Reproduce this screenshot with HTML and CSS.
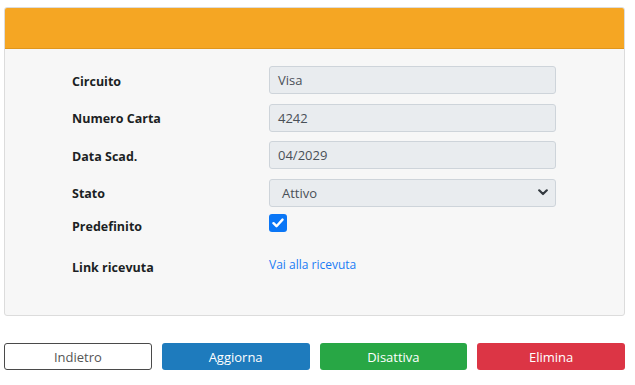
FILE: index.html
```html
<!DOCTYPE html>
<html lang="it">
<head>
<meta charset="utf-8">
<link rel="stylesheet" href="styles.css">
</head>
<body>
<div class="page">
  <div class="card">
    <div class="card-header"></div>
    <div class="card-body">
      <div class="row">
        <div class="label">Circuito</div>
        <div class="field"><div class="input">Visa</div></div>
      </div>
      <div class="row">
        <div class="label">Numero Carta</div>
        <div class="field"><div class="input">4242</div></div>
      </div>
      <div class="row">
        <div class="label">Data Scad.</div>
        <div class="field"><div class="input">04/2029</div></div>
      </div>
      <div class="row">
        <div class="label">Stato</div>
        <div class="field">
          <div class="input select">
            <span>Attivo</span>
            <svg class="chev" width="10" height="7" viewBox="0 0 10 7"><path d="M1.2 1.3 L5 5 L8.8 1.3" fill="none" stroke="#343a40" stroke-width="2.2" stroke-linecap="round" stroke-linejoin="round"/></svg>
          </div>
        </div>
      </div>
      <div class="row row-check">
        <div class="label">Predefinito</div>
        <div class="field">
          <span class="checkbox"><svg width="12" height="10" viewBox="0 0 12 10"><path d="M1.5 5.2 L4.5 8.2 L10.5 1.6" fill="none" stroke="#fff" stroke-width="2.4" stroke-linecap="round" stroke-linejoin="round"/></svg></span>
        </div>
      </div>
      <div class="row row-link">
        <div class="label">Link ricevuta</div>
        <div class="field"><a class="link" href="#">Vai alla ricevuta</a></div>
      </div>
    </div>
  </div>
  <div class="actions">
    <button class="btn btn-outline">Indietro</button>
    <button class="btn btn-blue">Aggiorna</button>
    <button class="btn btn-green">Disattiva</button>
    <button class="btn btn-red">Elimina</button>
  </div>
</div>
</body>
</html>
```

FILE: styles.css
```css
* { box-sizing: border-box; }
html, body { margin: 0; padding: 0; background: #fff; }
body {
  font-family: "Open Sans", "Liberation Sans", sans-serif;
  font-size: 13px;
  color: #212529;
}
.page {
  width: 621px;
  margin: 7px 0 0 4px;
}
.card {
  border: 1px solid #dcdcdc;
  border-radius: 3px;
  background: #f7f7f7;
  overflow: hidden;
}
.card-header {
  height: 41px;
  background: #f5a623;
  border-bottom: 1px solid #e0961c;
}
.card-body {
  padding: 17px 0 0 67px;
  height: 266px;
}
.row {
  display: flex;
  align-items: center;
  height: 28px;
  margin-bottom: 9.5px;
}
.label {
  width: 197px;
  font-weight: 700;
  font-size: 12.5px;
  color: #1c1f24;
  padding-top: 2px;
}
.field { width: 287px; }
.input {
  height: 28px;
  background: #e9ecef;
  border: 1px solid #ced4da;
  border-radius: 3px;
  padding: 0 8px;
  display: flex;
  align-items: center;
  color: #495057;
  font-size: 13px;
}
.select {
  justify-content: space-between;
  padding: 0 7px 0 12px;
}
.chev { display: block; }
.row-check { height: 18px; margin-top: -2px; margin-bottom: 0; align-items: center; }
.row-check .label { margin-top: 6px; padding-top: 0; }
.checkbox {
  width: 18px;
  height: 18px;
  border-radius: 3px;
  background: #0a76f6;
  display: flex;
  align-items: center;
  justify-content: center;
}
.row-link { margin-top: 22px; height: 20px; }
.row-link .label { margin-top: 7px; padding-top: 0; }
.link {
  color: #1a7cf5;
  text-decoration: none;
  font-size: 12px;
}
.actions {
  display: flex;
  gap: 10px;
  margin-top: 27px;
}
.btn {
  flex: 1;
  height: 27px;
  border-radius: 3px;
  font-family: "Open Sans", "Liberation Sans", sans-serif;
  font-size: 13px;
  border: 1px solid transparent;
  padding: 0;
  color: #fff;
}
.btn-outline { background: #fff; border-color: #4a4a4a; color: #555; }
.btn-blue { background: #1e7bbd; }
.btn-green { background: #28a745; }
.btn-red { background: #dc3545; }
```
